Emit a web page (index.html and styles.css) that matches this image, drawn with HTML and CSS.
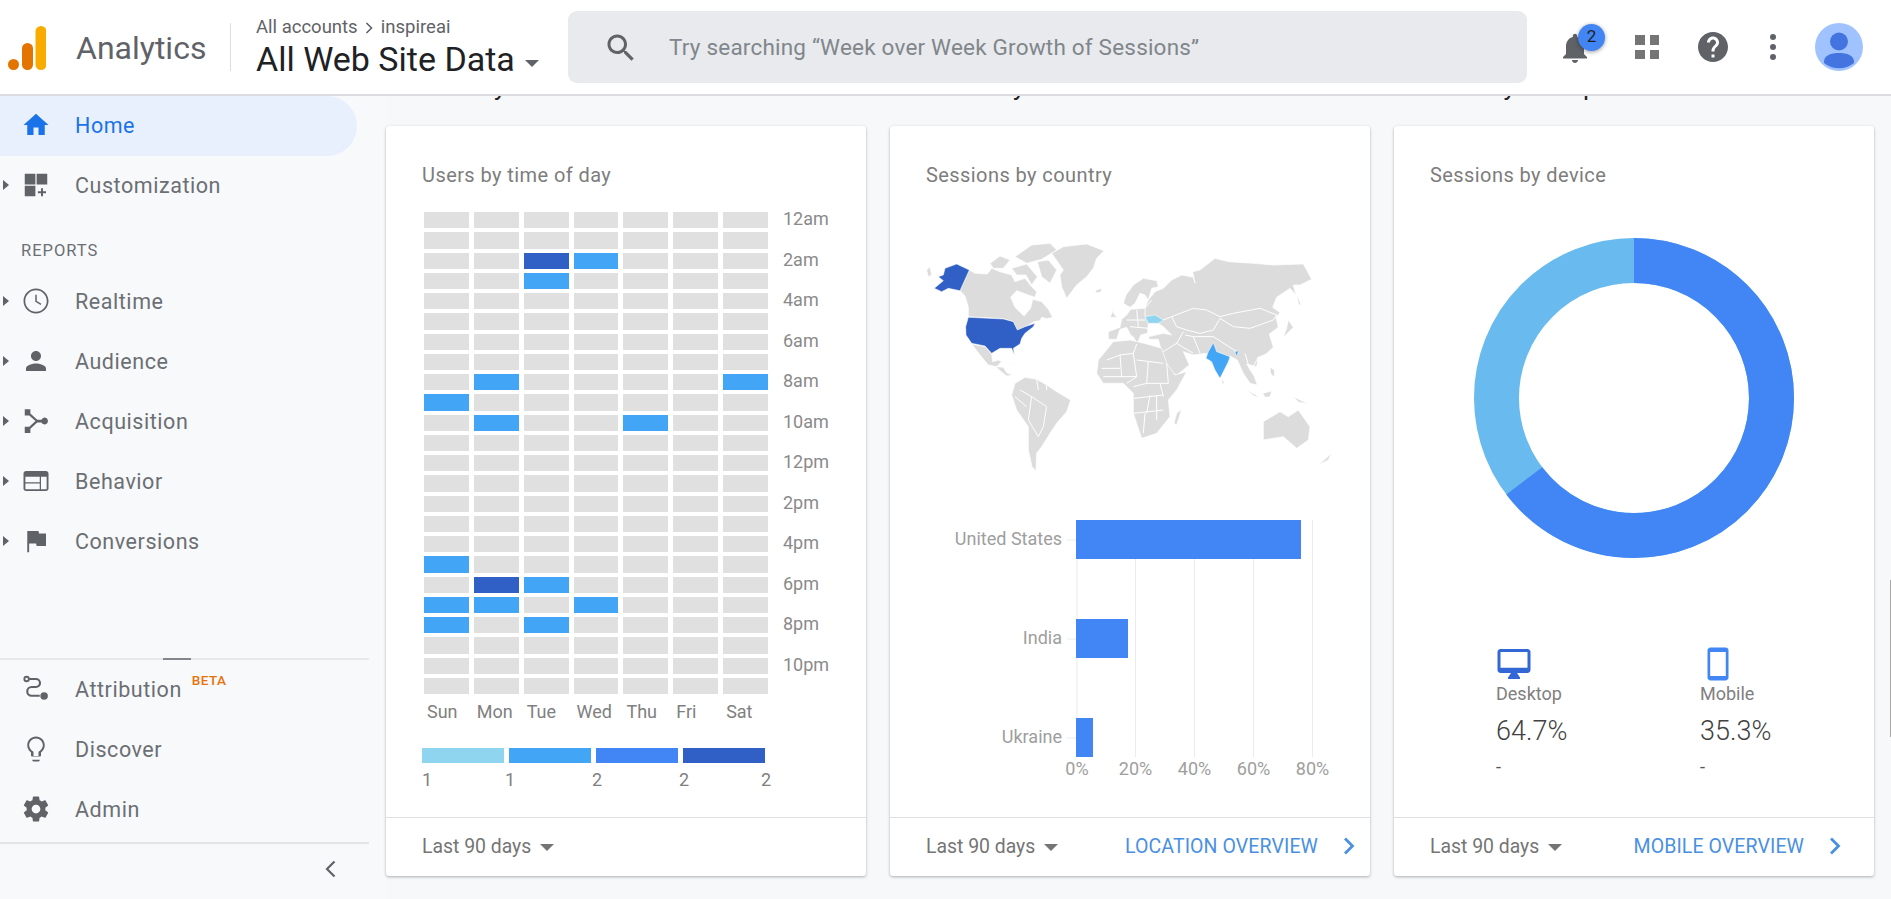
FILE: index.html
```html
<!DOCTYPE html>
<html lang="en">
<head>
<meta charset="utf-8">
<title>Analytics</title>
<link rel="stylesheet" href="styles.css">
</head>
<body>
<header class="topbar">
  <svg class="logo" viewBox="0 0 38 44" width="38" height="44" aria-hidden="true">
    <circle cx="5.5" cy="38.5" r="5.5" fill="#e37400"/>
    <rect x="14" y="17" width="11" height="27" rx="5.5" fill="#e37400"/>
    <rect x="27.5" y="0" width="11" height="44" rx="5.5" fill="#f9ab00"/>
  </svg>
  <div class="brand">Analytics</div>
  <div class="crumbs">
    <div class="crumb-line">All accounts <svg class="crumb-chevron" viewBox="0 0 8 12" width="8" height="12"><path d="M1.5 1l5 5-5 5" fill="none" stroke="#5f6368" stroke-width="1.6"/></svg> inspireai</div>
    <div class="view-line">All Web Site Data <span class="view-arrow"></span></div>
  </div>
  <div class="search">
    <svg class="search-icon" viewBox="0 0 24 24" width="36" height="36"><path d="M15.5 14h-.79l-.28-.27C15.41 12.59 16 11.11 16 9.5 16 5.91 13.09 3 9.5 3S3 5.91 3 9.5 5.91 16 9.5 16c1.61 0 3.09-.59 4.23-1.57l.27.28v.79l5 4.99L20.49 19l-4.99-5zm-6 0C7.01 14 5 11.99 5 9.5S7.01 5 9.5 5 14 7.01 14 9.5 11.99 14 9.5 14z"/></svg>
    <span class="search-text">Try searching “Week over Week Growth of Sessions”</span>
  </div>
  <div class="tools">
    <div class="bell">
      <svg viewBox="0 0 24 24" width="36" height="36"><path d="M12 22c1.1 0 2-.9 2-2h-4c0 1.1.89 2 2 2zm6-6v-5c0-3.07-1.64-5.64-4.5-6.32V4c0-.83-.67-1.5-1.5-1.5s-1.5.67-1.5 1.5v.68C7.63 5.36 6 7.92 6 11v5l-2 2v1h16v-1l-2-2z"/></svg>
      <span class="badge">2</span>
    </div>
    <div class="apps"><i></i><i></i><i></i><i></i></div>
    <svg class="help" viewBox="0 0 24 24" width="36" height="36"><path d="M12 2C6.48 2 2 6.48 2 12s4.48 10 10 10 10-4.48 10-10S17.52 2 12 2zm1 17h-2v-2h2v2zm2.07-7.75l-.9.92C13.45 12.9 13 13.5 13 15h-2v-.5c0-1.1.45-2.1 1.17-2.83l1.24-1.26c.37-.36.59-.86.59-1.41 0-1.1-.9-2-2-2s-2 .9-2 2H8c0-2.21 1.79-4 4-4s4 1.79 4 4c0 .88-.36 1.68-.93 2.25z"/></svg>
    <svg class="dots" viewBox="0 0 24 24" width="36" height="36"><circle cx="12" cy="5.3" r="2"/><circle cx="12" cy="12" r="2"/><circle cx="12" cy="18.7" r="2"/></svg>
    <svg class="avatar" viewBox="0 0 48 48" width="48" height="48"><circle cx="24" cy="24" r="24" fill="#a0c3ff"/><circle cx="24" cy="18.5" r="9" fill="#4374e0"/><path d="M9 38.5c0-6 7-8.500 15-8.500s15 2.500 15 8.500v1.500a24 24 0 0 1-30 0z" fill="#4374e0"/></svg>
  </div>
</header>

<div class="page">
  <nav class="sidebar">
    <a class="nav-item nav-active"><span class="caret caret-none"></span>
      <svg class="nav-icon" viewBox="0 0 24 24"><path d="M10 20v-6h4v6h5v-8h3L12 3 2 12h3v8z"/></svg><span>Home</span></a>
    <a class="nav-item"><span class="caret"></span>
      <svg class="nav-icon" viewBox="0 0 24 24"><path d="M3 3h8.500v8.500H3zM12.500 3H21v8.500h-8.500zM3 12.500h8.500V21H3zM16 14.500h1.600V17H20v1.500h-2.400V21H16v-2.500h-2.500V17H16z"/></svg><span>Customization</span></a>
    <div class="nav-heading">REPORTS</div>
    <a class="nav-item"><span class="caret"></span>
      <svg class="nav-icon" viewBox="0 0 24 24"><path d="M11.99 2C6.470 2 2 6.480 2 12s4.470 10 9.990 10C17.520 22 22 17.520 22 12S17.520 2 11.990 2zM12 20.600c-4.750 0-8.600-3.850-8.600-8.600S7.250 3.400 12 3.400s8.600 3.850 8.600 8.600-3.850 8.600-8.600 8.600zM12.600 7H11.400v5.600l4.300 2.600.6-1-3.700-2.200z"/></svg><span>Realtime</span></a>
    <a class="nav-item"><span class="caret"></span>
      <svg class="nav-icon" viewBox="0 0 24 24"><path d="M12 12c2.210 0 4-1.790 4-4s-1.790-4-4-4-4 1.790-4 4 1.790 4 4 4zm0 2c-2.670 0-8 1.340-8 4v2h16v-2c0-2.660-5.330-4-8-4z"/></svg><span>Audience</span></a>
    <a class="nav-item"><span class="caret"></span>
      <svg class="nav-icon" viewBox="0 0 24 24"><path d="M3 2.500h4.500v3.400l5.500 5h3.400a2.700 2.700 0 1 1 0 2.200H13l-5.500 5v3.400H3v-5h3.600l5-4.500-5-4.500H3z"/></svg><span>Acquisition</span></a>
    <a class="nav-item"><span class="caret"></span>
      <svg class="nav-icon" viewBox="0 0 24 24"><path d="M20 4H4c-1.100 0-1.990.9-1.990 2L2 18c0 1.100.9 2 2 2h16c1.100 0 2-.9 2-2V6c0-1.100-.9-2-2-2zm-5 14.500H3.500V14H15zm0-5.500H3.500V8.500H15zm5.500 5.500H16v-10h4.500z"/></svg><span>Behavior</span></a>
    <a class="nav-item"><span class="caret"></span>
      <svg class="nav-icon" viewBox="0 0 24 24"><path d="M14.400 6L14 4H5v17h1.500v-7h5.600l.4 2H20V6z"/></svg><span>Conversions</span></a>
    <div class="nav-space"></div>
    <div class="nav-rule"><span class="nav-rule-grip"></span></div>
    <a class="nav-item"><span class="caret caret-none"></span>
      <svg class="nav-icon" viewBox="0 0 24 24"><circle cx="4.500" cy="4" r="1.800" fill="none" stroke="#5f6368" stroke-width="1.500"/><path d="M6.500 4H12a3.200 3.200 0 0 1 0 6.400H8.500a3 3 0 0 0 0 7H15" fill="none" stroke="#5f6368" stroke-width="1.700"/><circle cx="18.500" cy="17.500" r="3"/></svg><span>Attribution</span><sup class="beta">BETA</sup></a>
    <a class="nav-item"><span class="caret caret-none"></span>
      <svg class="nav-icon" viewBox="0 0 24 24"><path d="M9 21c0 .3.400 1 1 1h4c.6 0 1-.7 1-1v-.5H9zm3-19C8.140 2 5 5.140 5 9c0 2.380 1.190 4.470 3 5.740V17c0 .55.45 1 1 1h6c.55 0 1-.45 1-1v-2.260c1.810-1.270 3-3.360 3-5.740 0-3.860-3.140-7-7-7zm2.850 11.600l-.85.6v3.300h-4v-3.300l-.85-.6C7.800 12.660 6.500 10.630 6.500 9c0-3 2.500-5.500 5.500-5.500s5.500 2.500 5.500 5.500c0 1.630-1.300 3.660-2.650 4.600z"/></svg><span>Discover</span></a>
    <a class="nav-item"><span class="caret caret-none"></span>
      <svg class="nav-icon" viewBox="0 0 24 24"><path d="M19.430 12.980c.04-.32.07-.64.07-.98s-.03-.66-.07-.98l2.110-1.650c.19-.15.24-.42.12-.64l-2-3.460c-.12-.22-.39-.3-.61-.22l-2.490 1c-.52-.4-1.080-.73-1.690-.98l-.38-2.650C14.460 2.180 14.250 2 14 2h-4c-.25 0-.46.18-.49.42l-.38 2.650c-.61.25-1.170.59-1.690.98l-2.490-1c-.23-.09-.49 0-.61.22l-2 3.460c-.13.22-.07.49.12.64l2.110 1.650c-.04.32-.07.65-.07.98s.03.66.07.98l-2.110 1.650c-.19.15-.24.42-.12.64l2 3.460c.12.22.39.3.61.22l2.490-1c.52.4 1.080.73 1.690.98l.38 2.650c.03.24.24.42.49.42h4c.25 0 .46-.18.49-.42l.38-2.650c.61-.25 1.170-.59 1.690-.98l2.490 1c.23.09.49 0 .61-.22l2-3.460c.12-.22.07-.49-.12-.64l-2.110-1.650zM12 15.500c-1.930 0-3.500-1.570-3.500-3.500s1.570-3.500 3.500-3.500 3.500 1.570 3.500 3.500-1.570 3.500-3.500 3.500z"/></svg><span>Admin</span></a>
    <div class="nav-foot">
      <svg viewBox="0 0 14 20" width="14" height="20"><path d="M11.500 2.500L4 10l7.500 7.500" fill="none" stroke="#5f6368" stroke-width="2.200"/></svg>
    </div>
  </nav>

  <main class="main">
    <div class="peek">
      <div>When do your users visit?</div>
      <div>Where are your users?</div>
      <div>What are your top devices?</div>
    </div>
    <div class="cards">
      <section class="card">
        <div class="card-body">
          <h2 class="card-title">Users by time of day</h2>
          <div class="heat">
            <i></i><i></i><i></i><i></i><i></i><i></i><i></i><b>12am</b>
            <i></i><i></i><i></i><i></i><i></i><i></i><i></i><b></b>
            <i></i><i></i><i class="dk"></i><i class="md"></i><i></i><i></i><i></i><b>2am</b>
            <i></i><i></i><i class="md"></i><i></i><i></i><i></i><i></i><b></b>
            <i></i><i></i><i></i><i></i><i></i><i></i><i></i><b>4am</b>
            <i></i><i></i><i></i><i></i><i></i><i></i><i></i><b></b>
            <i></i><i></i><i></i><i></i><i></i><i></i><i></i><b>6am</b>
            <i></i><i></i><i></i><i></i><i></i><i></i><i></i><b></b>
            <i></i><i class="md"></i><i></i><i></i><i></i><i></i><i class="md"></i><b>8am</b>
            <i class="md"></i><i></i><i></i><i></i><i></i><i></i><i></i><b></b>
            <i></i><i class="md"></i><i></i><i></i><i class="md"></i><i></i><i></i><b>10am</b>
            <i></i><i></i><i></i><i></i><i></i><i></i><i></i><b></b>
            <i></i><i></i><i></i><i></i><i></i><i></i><i></i><b>12pm</b>
            <i></i><i></i><i></i><i></i><i></i><i></i><i></i><b></b>
            <i></i><i></i><i></i><i></i><i></i><i></i><i></i><b>2pm</b>
            <i></i><i></i><i></i><i></i><i></i><i></i><i></i><b></b>
            <i></i><i></i><i></i><i></i><i></i><i></i><i></i><b>4pm</b>
            <i class="md"></i><i></i><i></i><i></i><i></i><i></i><i></i><b></b>
            <i></i><i class="dk"></i><i class="md"></i><i></i><i></i><i></i><i></i><b>6pm</b>
            <i class="md"></i><i class="md"></i><i></i><i class="md"></i><i></i><i></i><i></i><b></b>
            <i class="md"></i><i></i><i class="md"></i><i></i><i></i><i></i><i></i><b>8pm</b>
            <i></i><i></i><i></i><i></i><i></i><i></i><i></i><b></b>
            <i></i><i></i><i></i><i></i><i></i><i></i><i></i><b>10pm</b>
            <i></i><i></i><i></i><i></i><i></i><i></i><i></i><b></b>
          </div>
          <div class="days"><span>Sun</span><span>Mon</span><span>Tue</span><span>Wed</span><span>Thu</span><span>Fri</span><span>Sat</span></div>
          <div class="legend"><i class="lg1"></i><i class="lg2"></i><i class="lg3"></i><i class="lg4"></i></div>
          <div class="legend-nums"><span>1</span><span>1</span><span>2</span><span>2</span><span>2</span></div>
        </div>
        <div class="card-foot"><span class="range">Last 90 days</span><span class="range-arrow"></span></div>
      </section>

      <section class="card">
        <div class="card-body">
          <h2 class="card-title">Sessions by country</h2>
          <svg class="map" viewBox="0 0 1380 810" width="460" height="270" aria-hidden="true">
            <g class="land">
              <polygon points="208,150 225,160 262,162 275,145 300,155 335,165 345,185 375,175 395,200 410,215 405,232 385,225 350,212 332,232 345,262 372,288 392,265 398,238 425,245 445,268 458,292 440,296 425,292 420,302 402,305 378,320 352,332 340,305 310,296 205,290 205,262 195,228 180,212"/>
              <polygon points="270,130 300,108 330,120 310,145 280,145"/>
              <polygon points="345,110 395,75 450,70 470,90 425,118 380,130"/>
              <polygon points="335,145 380,132 412,170 395,195 378,165 350,165"/>
              <polygon points="412,125 445,120 470,150 450,190 425,170"/>
              <polygon points="455,100 490,80 560,72 612,92 590,115 580,145 560,170 530,195 500,235 485,200 480,165 490,150"/>
              <polygon points="80,150 90,140 95,165 85,170"/>
              <polygon points="215,372 255,380 275,402 278,425 295,420 305,425 290,440 265,435 240,405"/>
              <polygon points="288,440 310,442 320,458 338,466 320,468 300,452"/>
              <polygon points="318,425 360,437 338,432"/>
              <polygon points="345,490 375,472 410,478 440,495 470,515 512,540 500,575 470,610 450,640 425,680 410,700 408,752 396,740 385,690 385,620 350,570 335,525"/>
              <polygon points="585,212 605,205 603,216 590,218"/>
              <polygon points="635,258 642,282 650,292 630,292 638,275"/>
              <polygon points="670,250 678,225 700,195 730,175 770,182 775,200 755,205 745,240 735,225 720,220 705,250 690,262"/>
              <polygon points="735,265 745,240 765,215 790,205 815,180 845,165 880,172 885,190 878,155 900,150 945,115 985,125 1060,130 1120,135 1210,132 1235,178 1200,195 1180,195 1188,225 1170,205 1130,232 1118,262 1140,278 1128,292 1135,322 1108,342 1120,382 1098,402 1075,412 1070,440 1040,432 1062,468 1072,495 1050,490 1030,460 1012,420 990,408 960,475 930,420 918,400 880,405 850,395 868,435 830,465 790,440 785,395 775,358 748,358 745,350 790,340 815,345 790,320 775,310 745,310 735,290"/>
              <polygon points="625,335 660,322 665,298 680,285 692,268 735,265 735,290 745,310 742,340 722,345 712,372 700,350 690,345 704,368 680,322 660,328 650,358 625,358"/>
              <polygon points="640,365 690,360 740,372 785,385 800,430 825,465 860,455 830,510 805,540 810,590 770,640 725,655 700,580 700,520 670,490 610,490 590,460 595,420"/>
              <polygon points="830,580 845,568 830,615 822,610"/>
              <polygon points="1090,605 1140,575 1165,590 1195,570 1230,620 1225,660 1190,685 1150,650 1090,660"/>
              <polygon points="1040,510 1080,532 1062,528"/>
              <polygon points="1088,520 1115,513 1110,530 1095,532"/>
              <polygon points="1180,530 1225,552 1195,546"/>
              <polygon points="1110,440 1124,452 1122,472 1112,460"/>
              <polygon points="965,478 973,486 967,494"/>
              <polygon points="1165,300 1180,322 1150,352 1160,325"/>
              <polygon points="1190,222 1205,258 1195,250"/>
              <polygon points="1255,735 1295,700 1285,720"/>
            </g>
            <g class="borders">
              <polyline points="815,290 880,265 920,270 960,290 1000,280 1080,265 1130,285 1120,300 1050,325 1000,320 960,295 940,330 900,340 860,330 830,320 815,290"/>
              <polyline points="880,350 940,350 1010,395"/>
              <polyline points="880,350 900,400"/>
              <polyline points="855,345 880,350"/>
              <polyline points="790,300 815,290"/>
              <polyline points="680,300 735,300"/>
              <polyline points="690,320 745,325"/>
              <polyline points="710,270 715,320"/>
              <polyline points="735,265 755,240"/>
              <polyline points="790,395 830,370 880,400"/>
              <polyline points="830,370 850,335"/>
              <polyline points="1035,400 1050,450"/>
              <polyline points="1075,410 1060,440"/>
              <polyline points="620,420 660,405 700,400 710,372"/>
              <polyline points="660,405 665,470"/>
              <polyline points="700,400 710,470 680,490"/>
              <polyline points="710,420 790,430"/>
              <polyline points="745,425 740,490 700,500"/>
              <polyline points="740,490 805,490 800,430"/>
              <polyline points="610,470 710,470"/>
              <polyline points="605,445 660,445"/>
              <polyline points="780,490 790,530"/>
              <polyline points="702,535 790,525"/>
              <polyline points="700,580 790,570"/>
              <polyline points="735,580 730,640"/>
              <polyline points="770,525 770,600"/>
              <polyline points="750,525 740,580"/>
              <polyline points="360,510 395,530 440,560 430,620 415,650"/>
              <polyline points="395,530 385,600 415,650"/>
              <polyline points="345,530 380,560"/>
              <polyline points="410,478 415,510"/>
              <polyline points="440,495 440,510"/>
            </g>
            <polygon class="m-us" points="208,150 170,132 135,145 130,165 115,170 130,182 103,205 125,215 145,205 180,212"/>
            <polygon class="m-us" points="205,292 310,297 340,305 352,330 375,320 405,310 400,320 375,340 365,355 360,372 340,385 343,405 335,385 300,385 275,400 255,378 215,370 198,345 197,320"/>
            <polygon class="m-in" points="940,368 950,395 990,410 985,425 960,475 945,450 935,425 918,415 925,395"/>
            <polygon class="m-in" points="1005,395 1016,392 1010,410"/>
            <polygon class="m-ua" points="735,290 765,285 790,300 775,310 745,310"/>
          </svg>
          <svg class="bars" viewBox="926 500 420 290" width="420" height="290" aria-hidden="true">
            <g class="grid-lines">
              <line x1="1077" y1="520" x2="1077" y2="757"/><line x1="1135.500" y1="520" x2="1135.500" y2="757"/><line x1="1194.500" y1="520" x2="1194.500" y2="757"/><line x1="1253.500" y1="520" x2="1253.500" y2="757"/><line x1="1312.500" y1="520" x2="1312.500" y2="757"/>
              <line x1="1067" y1="540" x2="1076" y2="540"/><line x1="1067" y1="639" x2="1076" y2="639"/><line x1="1067" y1="738" x2="1076" y2="738"/>
            </g>
            <rect class="bar" x="1076" y="520" width="225" height="39"/>
            <rect class="bar" x="1076" y="619" width="52" height="39"/>
            <rect class="bar" x="1076" y="718" width="17" height="39"/>
            <g class="bar-labels">
              <text x="1062" y="545">United States</text><text x="1062" y="644">India</text><text x="1062" y="743">Ukraine</text>
            </g>
            <g class="bar-axis">
              <text x="1077" y="775">0%</text><text x="1135.500" y="775">20%</text><text x="1194.500" y="775">40%</text><text x="1253.500" y="775">60%</text><text x="1312.500" y="775">80%</text>
            </g>
          </svg>
        </div>
        <div class="card-foot"><span class="range">Last 90 days</span><span class="range-arrow"></span><span class="overview">LOCATION OVERVIEW</span>
          <svg class="chevron" viewBox="0 0 12 18" width="12" height="18"><path d="M2 1.500L9.500 9 2 16.500" fill="none" stroke="#4a90e2" stroke-width="2.800"/></svg></div>
      </section>

      <section class="card">
        <div class="card-body">
          <h2 class="card-title">Sessions by device</h2>
          <svg class="donut" viewBox="0 0 320 320" width="320" height="320" aria-hidden="true">
            <circle cx="160" cy="160" r="137.500" fill="none" stroke="#69baee" stroke-width="45"/>
            <circle class="donut-main" cx="160" cy="160" r="137.500" pathLength="100"/>
          </svg>
          <div class="devices">
            <div class="device">
              <svg class="dev-icon" viewBox="0 0 24 24" width="36" height="36"><path fill="#3367d6" d="M21 2H3c-1.100 0-2 .9-2 2v12c0 1.100.9 2 2 2h7l-2 3v1h8v-1l-2-3h7c1.100 0 2-.9 2-2V4c0-1.100-.9-2-2-2zm0 12.500H3V4h18z"/></svg>
              <div class="dev-name">Desktop</div>
              <div class="dev-value">64.7%</div>
              <div class="dev-delta">-</div>
            </div>
            <div class="device">
              <svg class="dev-icon" viewBox="0 0 24 24" width="36" height="36"><path fill="#4285f4" d="M17 1.010L7 1c-1.100 0-2 .9-2 2v18c0 1.100.9 2 2 2h10c1.100 0 2-.9 2-2V3c0-1.100-.9-1.990-2-1.990zM17.200 20H6.800V4h10.400z"/></svg>
              <div class="dev-name">Mobile</div>
              <div class="dev-value">35.3%</div>
              <div class="dev-delta">-</div>
            </div>
          </div>
        </div>
        <div class="card-foot card-foot-wide"><span class="range">Last 90 days</span><span class="range-arrow"></span><span class="overview">MOBILE OVERVIEW</span>
          <svg class="chevron" viewBox="0 0 12 18" width="12" height="18"><path d="M2 1.500L9.500 9 2 16.500" fill="none" stroke="#4a90e2" stroke-width="2.800"/></svg></div>
      </section>
    </div>
  </main>
</div>
<div class="scroll-thumb"></div>
</body>
</html>
```
FILE: styles.css
```css
* { box-sizing: border-box; }
html, body { margin: 0; height: 100%; }
body {
  position: relative;
  width: 1891px;
  height: 899px;
  overflow: hidden;
  display: flex;
  flex-direction: column;
  font-family: Roboto, "Liberation Sans", sans-serif;
  background: #f7f8fa;
  color: #5f6368;
}
.scroll-thumb { position: absolute; left: 1890px; top: 580px; width: 1px; height: 157px; background: #a8a8a8; }

/* Top bar */
.topbar {
  flex: none;
  height: 96px;
  display: flex;
  align-items: center;
  background: #fff;
  border-bottom: 2px solid #dadce0;
}
.logo { flex: none; margin-left: 8px; margin-top: 2px; }
.brand {
  flex: none;
  margin-left: 30px;
  width: 155px;
  height: 48px;
  font-size: 32px;
  line-height: 50px;
  color: #5f6368;
  border-right: 1px solid #dadce0;
}
.crumbs { flex: none; width: 337px; padding-left: 25px; }
.crumb-line { font-size: 18.500px; line-height: 22px; color: #5f6368; margin-top: 1px; }
.crumb-chevron { margin: 0 3px; vertical-align: -1px; }
.view-line { font-size: 34px; line-height: 40px; color: #202124; white-space: nowrap; margin-top: 1px; }
.view-arrow {
  display: inline-block;
  margin-left: 2px;
  vertical-align: 4px;
  border: 7.500px solid transparent;
  border-top-color: #5f6368;
  border-bottom-width: 0;
}
.search {
  flex: 1;
  height: 72px;
  display: flex;
  align-items: center;
  padding-left: 35px;
  background: #e8eaed;
  border-radius: 9px;
}
.search-icon { fill: #5f6368; margin-top: 1px; }
.search-text { margin-left: 30px; font-size: 22.500px; letter-spacing: .2px; color: #80868b; }
.tools { flex: none; display: flex; align-items: center; padding-left: 30px; padding-right: 28px; gap: 24px; }
.bell { position: relative; width: 36px; height: 36px; fill: #5f6368; margin-top: 1px; margin-right: 12px; }
.badge {
  position: absolute;
  left: 21px;
  top: -6px;
  width: 27px;
  height: 27px;
  border-radius: 50%;
  background: #4285f4;
  box-shadow: 0 1px 4px rgba(0,0,0,.4);
  color: #202124;
  font-size: 17px;
  line-height: 25px;
  text-align: center;
}
.apps {
  width: 24px;
  height: 24px;
  margin: 0 12px 0 6px;
  display: grid;
  grid-template-columns: 1fr 1fr;
  gap: 5px;
}
.apps i { background: #757575; display: block; }
.help { fill: #5f6368; }
.dots { fill: #5f6368; }

/* Layout */
.page { flex: 1; min-height: 0; display: flex; }

/* Sidebar */
.sidebar {
  flex: none;
  width: 386px;
  display: flex;
  flex-direction: column;
  background: #f8f9fb;
}
.nav-item {
  flex: none;
  width: 369px;
  height: 60px;
  padding-bottom: 2px;
  display: flex;
  align-items: center;
  font-size: 21.500px;
  letter-spacing: .55px;
  color: #6b6f73;
}
.nav-active {
  width: 357px;
  background: #e8f0fe;
  color: #1a73e8;
  border-radius: 0 30px 30px 0;
}
.nav-active .nav-icon { fill: #1a73e8; }
.caret {
  flex: none;
  width: 0;
  height: 0;
  margin-left: 3px;
  margin-right: 12px;
  border-left: 6px solid #5f6368;
  border-top: 5px solid transparent;
  border-bottom: 5px solid transparent;
}
.caret-none { border-left-color: transparent; }
.nav-icon { flex: none; width: 30px; height: 30px; margin-right: 25px; fill: #5f6368; }
.nav-item span:last-of-type { margin-left: -1px; }
.nav-heading {
  flex: none;
  height: 56px;
  padding: 23px 0 0 21px;
  font-size: 16.500px;
  line-height: 24px;
  letter-spacing: 1px;
  color: #6b6f73;
}
.nav-space { flex: 1; }
.nav-rule {
  flex: none;
  position: relative;
  width: 369px;
  height: 2px;
  background: #e8e9eb;
}
.nav-rule-grip { position: absolute; left: 163px; top: 0; width: 28px; height: 2px; background: #80868b; }
.beta {
  align-self: flex-start;
  margin: 12px 0 0 10px;
  font-size: 13.500px;
  font-weight: 500;
  line-height: 16px;
  letter-spacing: .4px;
  color: #e8710a;
}
.nav-foot {
  flex: none;
  width: 369px;
  height: 57px;
  margin-top: 2px;
  border-top: 2px solid #e3e4e6;
  display: flex;
  align-items: center;
  padding-left: 323px;
  padding-bottom: 6px;
}

/* Main */
.main { flex: 1; min-width: 0; padding-right: 17px; }
.peek {
  height: 30px;
  display: grid;
  grid-template-columns: repeat(3, 480px);
  gap: 24px;
  overflow: hidden;
}
.peek div {
  margin-top: -25px;
  font-size: 26px;
  line-height: 30px;
  color: #202124;
  height: 30px;
}
.cards { display: grid; grid-template-columns: repeat(3, 480px); gap: 24px; }
.card {
  height: 750px;
  display: flex;
  flex-direction: column;
  background: #fff;
  border-radius: 3px;
  box-shadow: 0 1px 3px rgba(0,0,0,.3);
}
.card-body { flex: 1; min-height: 0; padding: 34px 36px 0; }
.card-title { margin: 0; font-size: 20px; font-weight: 400; line-height: 30px; letter-spacing: .42px; color: #7d7d7d; }
.card-foot {
  flex: none;
  height: 59px;
  padding-bottom: 2px;
  display: flex;
  align-items: center;
  padding-left: 36px;
  padding-right: 15px;
  border-top: 1px solid #e0e0e0;
}
.card-foot-wide { padding-right: 33px; }
.range { font-size: 19.400px; color: #757575; }
.range-arrow {
  margin-left: 9px;
  margin-top: 2px;
  border: 7px solid transparent;
  border-top-color: #757575;
  border-bottom-width: 0;
}
.overview { margin-left: auto; margin-right: 25px; font-size: 19.500px; letter-spacing: .1px; color: #4a90e2; }

/* Heatmap */
.heat {
  margin: 22px 0 0 2px;
  width: 429px;
  height: 482px;
  display: grid;
  grid-template-columns: repeat(7, 1fr) 80px;
  grid-template-rows: repeat(24, 1fr);
  gap: 4px 5px;
}
.heat i { background: #e0e0e0; display: block; }
.heat i.md { background: #42a5f5; }
.heat i.dk { background: #3060c6; }
.heat b {
  padding-left: 10px;
  font-size: 18px;
  font-weight: 400;
  line-height: 14px;
  color: #8a8a8a;
  white-space: nowrap;
}
.days {
  margin: 8px 0 0 2px;
  width: 344px;
  display: grid;
  grid-template-columns: repeat(7, 1fr);
  gap: 5px;
  font-size: 18px;
  line-height: 20px;
  color: #808080;
}
.days span { padding-left: 3px; }
.legend { margin-top: 26px; width: 343px; height: 15px; display: grid; grid-template-columns: repeat(4, 82px); gap: 5px; }
.legend i { display: block; }
.lg1 { background: #90d5ef; }
.lg2 { background: #42a5f5; }
.lg3 { background: #4285f4; }
.lg4 { background: #3060c6; }
.legend-nums {
  margin-top: 7px;
  display: grid;
  grid-template-columns: 83px 87px 87px 82px auto;
  font-size: 18px;
  line-height: 20px;
  color: #808080;
}

/* Map + bars */
.map { display: block; margin: 30px 0 0 -26px; }
.land polygon { fill: #dcdcdc; stroke: #fff; stroke-width: 2; stroke-linejoin: round; }
.borders polyline { fill: none; stroke: #fff; stroke-width: 3; stroke-linejoin: round; }
.m-us { fill: #3060c6; stroke: #fff; stroke-width: 1.500; }
.m-in { fill: #42a5f5; stroke: #fff; stroke-width: 1.500; }
.m-ua { fill: #90d5ef; stroke: #fff; stroke-width: 1.500; }
.bars { display: block; margin-top: 10px; }
.grid-lines line { stroke: #ebebeb; stroke-width: 1; }
.bar { fill: #4285f4; }
.bar-labels text { font-size: 18px; fill: #9e9e9e; text-anchor: end; }
.bar-axis text { font-size: 18px; fill: #9e9e9e; text-anchor: middle; }

/* Device donut */
.donut { display: block; margin: 48px 0 0 44px; }
.donut-main {
  fill: none;
  stroke: #4285f4;
  stroke-width: 45;
  stroke-dasharray: 64.7 100;
  transform: rotate(-90deg);
  transform-origin: 160px 160px;
}
.devices { margin: 88px 0 0 66px; display: flex; }
.device { flex: none; width: 204px; }
.dev-icon { display: block; }
.dev-name { margin-top: 1px; font-size: 18px; line-height: 22px; color: #808080; }
.dev-value { margin-top: 8px; font-size: 27px; font-weight: 300; line-height: 36px; color: #424242; }
.dev-delta { margin-top: 8px; font-size: 18px; line-height: 20px; color: #555; }
```
